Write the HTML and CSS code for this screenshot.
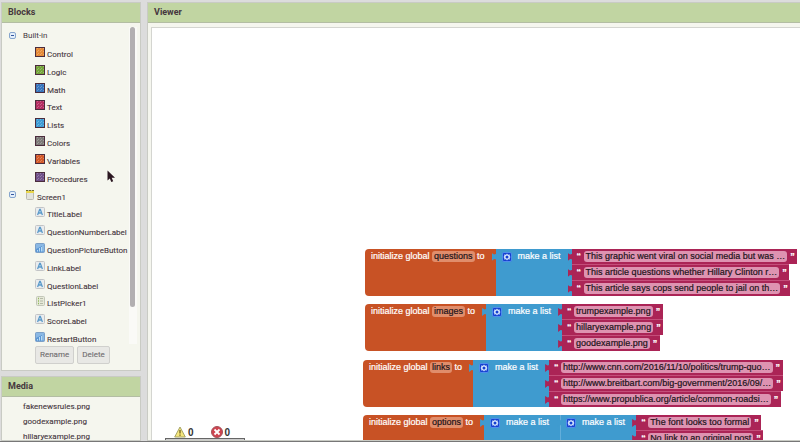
FILE: index.html
```
<!DOCTYPE html>
<html lang="en">
<head>
<meta charset="utf-8">
<title>Blocks editor</title>
<link rel="stylesheet" href="styles.css">
</head>
<body>
<svg class="defs" aria-hidden="true">
  <defs>
    <pattern id="dots" width="3" height="3" patternUnits="userSpaceOnUse"><path d="M0 0h1v1H0zM2 1h1v1H2z" fill="#fff" opacity=".25"/></pattern>
    <symbol id="minus" viewBox="0 0 7 7"><rect x=".5" y=".5" width="6" height="6" rx="1.500" fill="#e4effa" stroke="#86a5cd"/><path d="M2 3.500h3" stroke="#3556a0"/></symbol>
    <symbol id="swatch" viewBox="0 0 10 10"><rect x=".5" y=".5" width="9" height="9" fill="currentColor" stroke="#4b2c3c"/><rect x="1" y="1" width="8" height="8" fill="url(#dots)"/></symbol>
    <symbol id="label" viewBox="0 0 10 10"><rect x=".5" y=".5" width="9" height="9" rx="1" fill="#e9ecee" stroke="#c2c4c6"/><path d="M2.600 8 4.700 2.300h.6L7.400 8M3.500 6h3" fill="none" stroke="#5a9aca" stroke-width="1.300"/></symbol>
    <symbol id="button" viewBox="0 0 10 10"><rect x=".5" y=".5" width="9" height="9" rx="1" fill="#5b97d5" stroke="#7c9fc6"/><path d="M1 1h8v1L1 6z" fill="#8ab8e4"/><path d="M2.500 8.500V7M4.500 8.500V5M6.500 8.500V4M8 8.500V2.500" stroke="#b9daf3"/></symbol>
    <symbol id="picker" viewBox="0 0 10 10"><rect x="1.500" y=".5" width="8" height="9" rx="1" fill="#e6e9d9" stroke="#c3c7b9"/><path d="M3 2.500h1M3 5h1M3 7.500h1" stroke="#91b85d" stroke-width="1.500"/><path d="M5 2.500h3M5 5h3M5 7.500h3" stroke="#b5baa8"/></symbol>
    <symbol id="screen" viewBox="0 0 10 12"><rect x="1.500" y="1.500" width="7" height="9" rx="1" fill="#e3e3dc" stroke="#babab2"/><path d="M1 1.500h8" stroke="#72712f" stroke-dasharray="2 1"/><path d="M1 3h8" stroke="#ead64b" stroke-width="2"/></symbol>
    <symbol id="gear" viewBox="0 0 10 10"><rect x=".5" y=".5" width="9" height="9" rx="1.500" fill="#1440d0" stroke="#4f8cec"/><path d="m5 1.500 1 1.300 1.900-.3-.3 1.600L8.500 5l-.9.900.3 1.600-1.900-.3L5 8.500l-1-1.300-1.900.3.3-1.600L1.500 5l.9-.9-.3-1.600 1.900.3z" fill="#dcebff"/><circle cx="5" cy="5" r="1.500" fill="#1440d0"/></symbol>
  </defs>
</svg>

<div class="app">
  <aside class="side">
    <section class="panel blocks">
      <h2>Blocks</h2>
      <div class="tree">
        <div class="root"><svg class="toggle"><use href="#minus"/></svg>Built-in</div>
        <ul class="nodes">
          <li><svg class="orange"><use href="#swatch"/></svg>Control</li>
          <li><svg class="green"><use href="#swatch"/></svg>Logic</li>
          <li><svg class="blue"><use href="#swatch"/></svg>Math</li>
          <li><svg class="pink"><use href="#swatch"/></svg>Text</li>
          <li><svg class="sky"><use href="#swatch"/></svg>Lists</li>
          <li><svg class="gray"><use href="#swatch"/></svg>Colors</li>
          <li><svg class="rust"><use href="#swatch"/></svg>Variables</li>
          <li><svg class="purple"><use href="#swatch"/></svg>Procedures</li>
          <li class="screen"><svg class="toggle"><use href="#minus"/></svg><svg><use href="#screen"/></svg>Screen1</li>
          <li><svg><use href="#label"/></svg>TitleLabel</li>
          <li><svg><use href="#label"/></svg>QuestionNumberLabel</li>
          <li><svg><use href="#button"/></svg>QuestionPictureButton</li>
          <li><svg><use href="#label"/></svg>LinkLabel</li>
          <li><svg><use href="#label"/></svg>QuestionLabel</li>
          <li><svg><use href="#picker"/></svg>ListPicker1</li>
          <li><svg><use href="#label"/></svg>ScoreLabel</li>
          <li><svg><use href="#button"/></svg>RestartButton</li>
        </ul>
        <div class="track"><div class="thumb"></div></div>
      </div>
      <div class="actions"><button type="button">Rename</button><button type="button">Delete</button></div>
    </section>
    <section class="panel media">
      <h2>Media</h2>
      <ul>
        <li>fakenewsrules.png</li>
        <li>goodexample.png</li>
        <li>hillaryexample.png</li>
      </ul>
    </section>
  </aside>

  <main class="panel viewer">
    <h2>Viewer</h2>
    <div class="workspace">
      <div class="block questions">
        <div class="global">initialize global <span class="chip">questions</span> to</div>
        <div class="list"><svg><use href="#gear"/></svg>make a list</div>
        <div class="items">
          <div class="text"><i>“</i><span class="chip">This graphic went viral on social media but was …</span><i>”</i></div>
          <div class="text"><i>“</i><span class="chip">This article questions whether Hillary Clinton r…</span><i>”</i></div>
          <div class="text"><i>“</i><span class="chip">This article says cops send people to jail on th…</span><i>”</i></div>
        </div>
      </div>
      <div class="block images">
        <div class="global">initialize global <span class="chip">images</span> to</div>
        <div class="list"><svg><use href="#gear"/></svg>make a list</div>
        <div class="items">
          <div class="text"><i>“</i><span class="chip">trumpexample.png</span><i>”</i></div>
          <div class="text"><i>“</i><span class="chip">hillaryexample.png</span><i>”</i></div>
          <div class="text"><i>“</i><span class="chip">goodexample.png</span><i>”</i></div>
        </div>
      </div>
      <div class="block links">
        <div class="global">initialize global <span class="chip">links</span> to</div>
        <div class="list"><svg><use href="#gear"/></svg>make a list</div>
        <div class="items">
          <div class="text"><i>“</i><span class="chip">http://www.cnn.com/2016/11/10/politics/trump-quo…</span><i>”</i></div>
          <div class="text"><i>“</i><span class="chip">http://www.breitbart.com/big-government/2016/09/…</span><i>”</i></div>
          <div class="text"><i>“</i><span class="chip">https://www.propublica.org/article/common-roadsi…</span><i>”</i></div>
        </div>
      </div>
      <div class="block options">
        <div class="global">initialize global <span class="chip">options</span> to</div>
        <div class="list"><svg><use href="#gear"/></svg>make a list</div>
        <div class="list nested"><svg><use href="#gear"/></svg>make a list</div>
        <div class="items">
          <div class="text"><i>“</i><span class="chip">The font looks too formal</span><i>”</i></div>
          <div class="text"><i>“</i><span class="chip">No link to an original post</span><i>”</i></div>
        </div>
      </div>
      <div class="status">
        <div class="counts">
          <span><svg viewBox="0 0 12 12"><path d="M6 1 11.300 11H.7z" fill="#f5e67c" stroke="#a5a266"/><path d="M6 4v3.500M6 8.500v1.300" stroke="#6b5b1d" stroke-width="1.300"/></svg>0</span>
          <span><svg viewBox="0 0 12 12"><circle cx="6" cy="6" r="5.500" fill="#cf4450" stroke="#a3525a"/><path d="m3.500 3.500 5 5m0-5-5 5" stroke="#fff" stroke-width="1.800"/></svg>0</span>
        </div>
        <div class="warnings"></div>
      </div>
    </div>
  </main>
</div>
<svg class="cursor" viewBox="0 0 8 12" aria-hidden="true"><path d="M.5.500v10l2.300-2L4.300 12l1.900-.8-1.500-3.400H8z" fill="#2a1620"/></svg>
</body>
</html>
```
FILE: styles.css
```
* { box-sizing: border-box; }
body {
  margin: 0;
  height: 100vh;
  overflow: hidden;
  background: #dcdcdc;
  color: #46373e;
  font: 8px/14px Roboto, sans-serif;
}
.defs { position: absolute; width: 0; height: 0; }
ul { list-style: none; margin: 0; padding: 0; }
.app {
  display: grid;
  grid-template-columns: 140px 1fr;
  gap: 6px;
  height: 100vh;
  padding: 2px 0 0 1px;
  border-bottom: 1px solid #777;
}
.side { display: flex; flex-direction: column; gap: 5px; min-height: 0; }
.panel { background: #f5f6ee; border: 1px solid #c9cbc4; min-width: 0; }
h2 {
  margin: 0;
  padding: 0 6px;
  background: #c1d5a2;
  border-bottom: 1px solid #b3bda3;
  font-size: 9px;
  line-height: 19px;
  font-weight: 700;
}

.tree {
  display: grid;
  grid-template-columns: 1fr 8px;
  grid-template-rows: 19px 303px;
  height: 321px;
  padding-top: 4px;
  margin-right: 3px;
  overflow: hidden;
}
.root { display: flex; align-items: center; gap: 7px; padding: 0 0 2px 7px; }
svg.toggle { width: 7px; height: 7px; margin: 0; }
.nodes { display: flex; flex-direction: column; grid-column: 1; min-width: 0; -webkit-text-stroke: 0.1px; }
.nodes li { flex: 1; display: flex; align-items: center; padding-left: 33px; white-space: nowrap; }
.nodes svg { flex: none; width: 10px; height: 10px; margin: 0 2px 6px 0; }
.nodes .screen { padding-left: 7px; }
.nodes .screen svg { height: 12px; margin-left: 9px; }
.nodes .screen .toggle { width: 7px; height: 7px; margin: 0 0 6px; }
.track { grid-column: 2; grid-row: 1 / 3; background: #fafaf7; padding: 0 1px; }
.thumb { height: 280px; width: 5px; border-radius: 3px; background: #b2afb1; }
.orange { color: #e58a37; }
.green { color: #75a43b; }
.blue { color: #3976bd; }
.pink { color: #b52e61; }
.sky { color: #3e9cd5; }
.gray { color: #7d7a78; }
.rust { color: #d45a29; }
.purple { color: #71528a; }
.actions { display: flex; gap: 3px; padding: 2px 33px 6px; }
button {
  height: 18px;
  padding: 0 4px;
  border: 1px solid #d0d0cd;
  border-radius: 2px;
  background: #e8e8e5;
  color: #706e70;
  font: 8px/14px Roboto, sans-serif;
  -webkit-text-stroke: 0.1px;
}
.media { flex: 1; overflow: hidden; }
.media ul { padding: 2px 21px; line-height: 15px; -webkit-text-stroke: 0.1px; }

.viewer { display: flex; flex-direction: column; border-right: 0; }
.workspace {
  position: relative;
  flex: 1;
  margin: 4px 0 0 3px;
  border: solid #d4d5d0;
  border-width: 1px 0 0 1px;
  background: #fff;
  overflow: hidden;
  font: 9px/11px "Liberation Sans", Arial, sans-serif;
}
.block { position: absolute; display: flex; height: 47px; color: #fff; white-space: nowrap; -webkit-text-stroke: 0.2px; }
.questions { left: 213px; top: 221px; }
.images { left: 213px; top: 276px; }
.links { left: 211px; top: 332px; }
.options { left: 211px; top: 387px; }
.global {
  padding: 2px 11px 0 6px;
  border-radius: 4px 0 0 4px;
  background: #c85225;
}
.global .chip { background: #e08d6b; }
.chip { display: inline-block; height: 11px; padding: 0 2px; border-radius: 3px; background: #de93b1; color: #21131a; }
.list {
  position: relative;
  display: flex;
  align-items: flex-start;
  gap: 6px;
  padding: 2px 11px 0 6px;
  background: #3f9bcf;
}
.list svg { width: 10px; height: 10px; margin-top: 1px; }
.nested { border-left: 1px solid #63aeda; padding-left: 5px; }
.items { display: flex; flex-direction: column; align-items: flex-start; }
.text {
  position: relative;
  flex: 1;
  display: flex;
  align-items: center;
  gap: 3px;
  padding: 0 3px 0 5px;
  background: #ab2456;
}
.text + .text { border-top: 1px solid #c44e7a; }
.text i { width: 4px; font-style: normal; font-weight: 700; }
.options .items { height: 31px; }
.list::before, .text::before {
  content: "";
  position: absolute;
  left: -4px;
  top: 4px;
  width: 5px;
  height: 8px;
  background: inherit;
  clip-path: polygon(0 0, 50% 20%, 100% 10%, 100% 80%, 50% 75%, 0 100%);
}
.status { position: absolute; left: 13px; bottom: 0; width: 80px; }
.counts { display: flex; gap: 17px; padding-left: 9px; color: #333; font-weight: 700; }
.counts span { display: flex; align-items: center; gap: 2px; font-size: 10px; }
.counts svg { width: 12px; height: 12px; }
.warnings { height: 2px; border: 1px solid #666; border-bottom: 0; background: #ccc; }
.cursor { position: absolute; left: 107px; top: 170px; width: 8px; height: 12px; }
```
